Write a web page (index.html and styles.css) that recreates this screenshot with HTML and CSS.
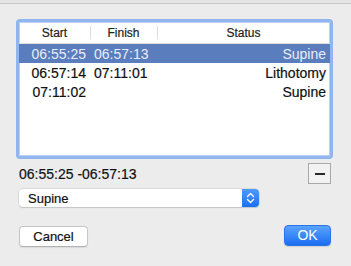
FILE: index.html
```html
<!DOCTYPE html>
<html>
<head>
<meta charset="utf-8">
<link rel="stylesheet" href="styles.css">
</head>
<body>
<div class="topbar"></div>
<div class="dialog">
  <div class="table">
    <div class="thead">
      <div class="th c-start">Start</div>
      <div class="th c-finish">Finish</div>
      <div class="th c-status">Status</div>
    </div>
    <div class="row selected">
      <div class="td c-start">06:55:25</div>
      <div class="td c-finish">06:57:13</div>
      <div class="td c-status">Supine</div>
    </div>
    <div class="row">
      <div class="td c-start">06:57:14</div>
      <div class="td c-finish">07:11:01</div>
      <div class="td c-status">Lithotomy</div>
    </div>
    <div class="row">
      <div class="td c-start">07:11:02</div>
      <div class="td c-finish"></div>
      <div class="td c-status">Supine</div>
    </div>
  </div>
  <div class="summary">
    <span class="range">06:55:25 -06:57:13</span>
    <button class="minus" aria-label="Remove"><span></span></button>
  </div>
  <div class="popup">
    <span class="popup-label">Supine</span>
    <span class="popup-arrows">
      <svg width="17" height="18" viewBox="0 0 17 18"><path d="M5.5 7.5 L8.5 4.5 L11.5 7.5 M5.5 10.5 L8.5 13.5 L11.5 10.5" fill="none" stroke="#fff" stroke-width="1.4" stroke-linecap="round" stroke-linejoin="round"/></svg>
    </span>
  </div>
  <div class="buttons">
    <button class="btn cancel">Cancel</button>
    <button class="btn ok">OK</button>
  </div>
</div>
</body>
</html>
```
FILE: styles.css
```css
html, body {
  margin: 0;
  padding: 0;
}
body {
  width: 351px;
  height: 266px;
  background: #ececec;
  font-family: "Liberation Sans", Arial, sans-serif;
  color: #111;
  overflow: hidden;
  -webkit-text-stroke: 0.2px currentColor;
}
.topbar {
  height: 3px;
  background: #e4e4e4;
  border-bottom: 1px solid #c9c9c9;
}
.dialog {
  padding: 15px 20px 0 19px;
  display: flex;
  flex-direction: column;
}
.table {
  margin: 0 -2px 0 -3px;
  height: 134px;
  background: #fff;
  border: 3px solid #91b6ef;
  border-radius: 4px;
  box-shadow: inset 0 0 0 1px #bcd0f3;
  overflow: hidden;
}
.thead {
  display: flex;
  height: 21px;
  border-bottom: 1px solid #dedede;
  font-size: 12px;
  color: #222;
}
.th {
  display: flex;
  align-items: center;
  justify-content: center;
  position: relative;
}
.th + .th::before {
  content: "";
  position: absolute;
  left: 0;
  top: 4px;
  bottom: 4px;
  width: 1px;
  background: #dcdcdc;
}
.c-start { width: 71px; }
.c-finish { width: 67px; }
.c-status { flex: 1; }
.row {
  display: flex;
  height: 19px;
  line-height: 20px;
  font-size: 14px;
}
.td { box-sizing: border-box; white-space: nowrap; }
.td.c-start { text-align: right; padding-right: 4px; }
.td.c-finish { text-align: left; padding-left: 4px; }
.td.c-status { text-align: right; padding-right: 4px; }
.row.selected {
  background: #5a7dbe;
  color: #e8edf6;
  -webkit-text-stroke: 0;
}
.summary {
  margin-top: 4px;
  height: 21px;
  display: flex;
  align-items: center;
  justify-content: space-between;
  font-size: 14px;
}
.range { color: #111; }
.minus {
  width: 23px;
  height: 21px;
  padding: 0;
  border: 1px solid #a8a8a8;
  background: #f2f2f2;
  display: flex;
  align-items: center;
  justify-content: center;
}
.minus span {
  width: 10px;
  height: 2px;
  background: #2a2a2a;
}
.popup {
  margin-top: 5px;
  width: 240px;
  height: 18px;
  display: flex;
  align-items: center;
  background: #fff;
  border-radius: 4px;
  box-shadow: 0 0 0 0.5px #c8c8c8, 0 1px 1px rgba(0,0,0,0.18);
  overflow: hidden;
  font-size: 13px;
}
.popup-label {
  flex: 1;
  padding-left: 9px;
}
.popup-arrows {
  width: 17px;
  height: 18px;
  background: linear-gradient(#4e9bfb, #1b6ff2);
  display: flex;
}
.buttons {
  margin-top: 18px;
  display: flex;
  justify-content: space-between;
  align-items: flex-start;
}
.btn {
  font-family: "Liberation Sans", Arial, sans-serif;
  font-size: 13px;
  height: 21px;
  padding: 0;
  border-radius: 4px;
  line-height: 19px;
}
.cancel {
  width: 69px;
  margin-top: 1px;
  background: #fff;
  color: #111;
  border: 1px solid #c6c6c6;
  border-bottom-color: #b3b3b3;
  box-shadow: 0 1px 1px rgba(0,0,0,0.08);
}
.ok {
  width: 47px;
  font-size: 14px;
  color: #fff;
  -webkit-text-stroke: 0;
  border: 1px solid #2a74ea;
  background: linear-gradient(#5aa3fc, #1c6ef2);
  box-shadow: 0 1px 1px rgba(0,0,0,0.12);
}
```
